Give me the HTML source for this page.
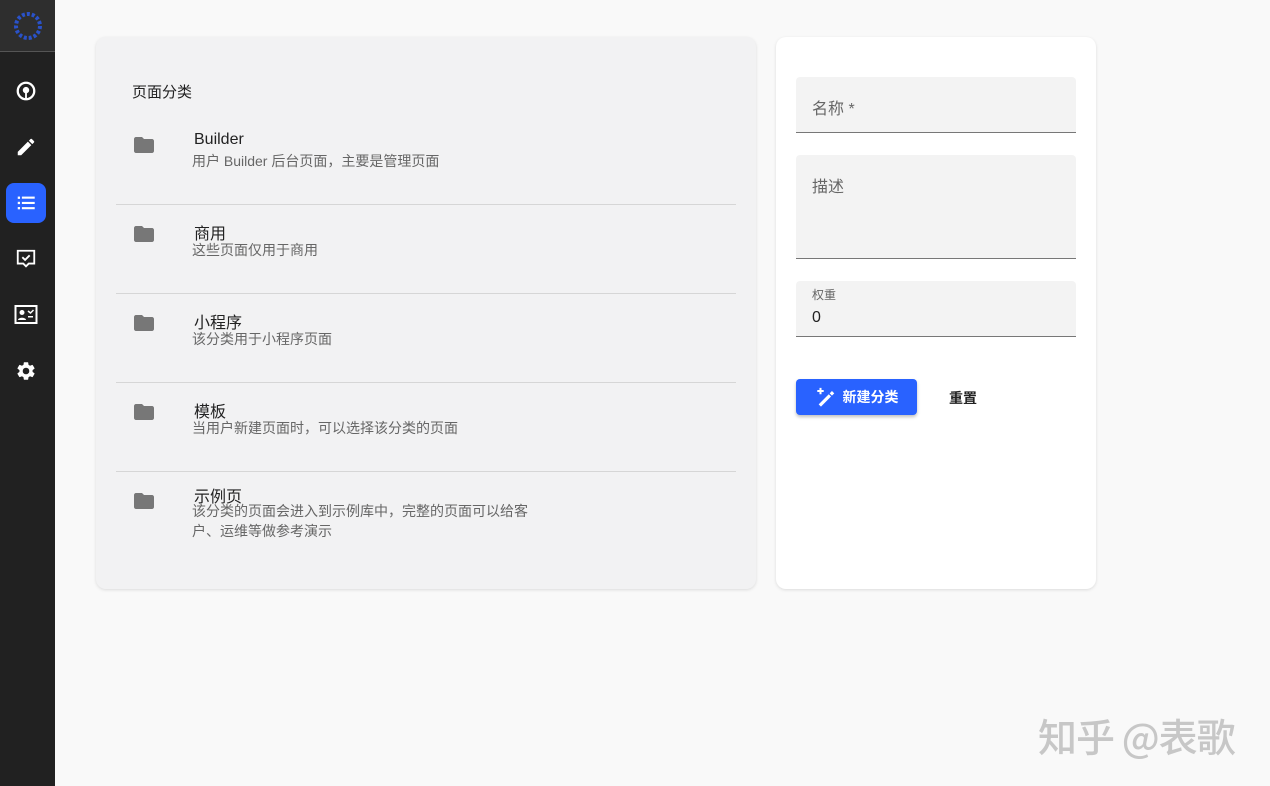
<!DOCTYPE html>
<html><head><meta charset="utf-8"><style>
*{box-sizing:border-box;margin:0;padding:0}
body{width:1270px;height:786px;background:#f9f9f9;font-family:"Liberation Sans","Noto Sans CJK SC",sans-serif;position:relative;overflow:hidden}
.side{position:absolute;left:0;top:0;width:55px;height:786px;background:#212121}
.logo{height:52px;background:#2e2e2e;border-bottom:1px solid #555;display:flex;align-items:center;justify-content:center}
.ic{position:absolute;left:6px;width:40px;height:40px;display:flex;align-items:center;justify-content:center;border-radius:8px}
.left{position:absolute;left:96px;top:37px;width:660px;height:552px;background:#f2f2f3;border-radius:10px;box-shadow:0 1px 3px rgba(0,0,0,.12)}
.right{position:absolute;left:776px;top:37px;width:320px;height:552px;background:#fff;border-radius:10px;box-shadow:0 1px 3px rgba(0,0,0,.12)}
.hd{position:absolute;left:36px;top:44px;font-size:15px;color:#222}
.item{position:absolute;left:20px;width:620px;border-bottom:1px solid #d6d6d6;height:89px}
.item .t{position:absolute;left:78px;top:15px;font-size:16px;color:#222}
.item .d{position:absolute;left:76px;top:35px;font-size:14px;color:#666;line-height:20px;width:350px}
.item svg{position:absolute;left:16px;top:17px}
.f{position:absolute;left:20px;width:280px;background:#f3f3f3;border-bottom:1px solid #777;border-radius:4px 4px 0 0}
.btn{position:absolute;left:20px;top:342px;width:121px;height:36px;background:#2962ff;border-radius:4px;color:#fff;font-size:14px;font-weight:bold;display:flex;align-items:center;justify-content:center;gap:6px;box-shadow:0 2px 3px rgba(0,0,0,.25)}
</style></head><body>
<div class="side">
<div class="logo"><svg width="32" height="32" viewBox="0 0 32 32"><circle cx="16" cy="16" r="12" fill="none" stroke="#2a52c9" stroke-width="4" stroke-dasharray="3 2"/></svg></div>
<div class="ic" style="top:71px"><svg width="22" height="22" viewBox="0 0 24 24"><circle cx="12" cy="12" r="9" fill="none" stroke="#fff" stroke-width="2.5"/><circle cx="12" cy="11" r="3.5" fill="#fff"/><path d="M12 12v9" stroke="#fff" stroke-width="2"/></svg></div>
<div class="ic" style="top:127px"><svg width="22" height="22" viewBox="0 0 24 24"><path fill="#fff" d="M3 17.25V21h3.75L17.8 9.94l-3.75-3.75L3 17.25zM20.7 7.04a1 1 0 000-1.41l-2.34-2.34a1 1 0 00-1.41 0l-1.83 1.83 3.75 3.75 1.83-1.83z"/></svg></div>
<div class="ic" style="top:183px;background:#2962ff"><svg width="22" height="22" viewBox="0 0 24 24" fill="#fff"><rect x="3" y="5" width="2.5" height="2.5"/><rect x="3" y="10.7" width="2.5" height="2.5"/><rect x="3" y="16.4" width="2.5" height="2.5"/><rect x="7.5" y="5" width="14" height="2.3"/><rect x="7.5" y="10.8" width="14" height="2.3"/><rect x="7.5" y="16.5" width="14" height="2.3"/></svg></div>
<div class="ic" style="top:239px"><svg width="22" height="22" viewBox="0 0 24 24"><path d="M3 3h18v14h-6l-3 3-3-3H3z" fill="none" stroke="#fff" stroke-width="2"/><path d="M8 10l3 3 5-5" fill="none" stroke="#fff" stroke-width="2"/></svg></div>
<div class="ic" style="top:295px"><svg width="24" height="22" viewBox="0 0 24 22"><rect x="1.5" y="2" width="21" height="17" fill="none" stroke="#fff" stroke-width="2"/><circle cx="8" cy="8.5" r="2.5" fill="#fff"/><path d="M4 16c0-3 8-3 8 0z" fill="#fff"/><path d="M14 7l2.5 2 3-3" fill="none" stroke="#fff" stroke-width="1.5"/><rect x="14" y="12" width="5" height="1.5" fill="#fff"/></svg></div>
<div class="ic" style="top:351px"><svg width="22" height="22" viewBox="0 0 24 24"><path fill="#fff" d="M19.14 12.94c.04-.3.06-.61.06-.94s-.02-.64-.07-.94l2.03-1.58a.49.49 0 00.12-.61l-1.92-3.32a.49.49 0 00-.59-.22l-2.39.96c-.5-.38-1.03-.7-1.620-.94l-.36-2.54a.48.48 0 00-.48-.41h-3.84a.48.48 0 00-.47.41l-.36 2.54c-.59.24-1.13.57-1.62.94l-2.39-.96a.49.49 0 00-.59.22L2.74 8.87a.47.47 0 00.12.61l2.03 1.58c-.05.3-.09.63-.09.94s.02.64.07.94l-2.03 1.58a.49.49 0 00-.12.61l1.92 3.32c.12.22.37.29.59.22l2.39-.96c.5.38 1.03.7 1.62.94l.36 2.54c.05.24.24.41.48.41h3.840c.24 0 .44-.17.47-.41l.36-2.54c.59-.24 1.13-.56 1.62-.94l2.39.96c.22.08.47 0 .59-.22l1.92-3.32a.47.47 0 00-.12-.61l-2.01-1.58zM12 15.6A3.6 3.6 0 1112 8.4a3.6 3.6 0 010 7.2z"/></svg></div>
</div>
<div class="left">
<div class="hd">页面分类</div>
<div class="item" style="top:79px"><svg width="24" height="24" viewBox="0 0 24 24"><path fill="#777" d="M10 4H4c-1.1 0-2 .9-2 2v12c0 1.1.9 2 2 2h16c1.1 0 2-.9 2-2V8c0-1.1-.9-2-2-2h-8l-2-2z"/></svg><div class="t">Builder</div><div class="d">用户 Builder 后台页面，主要是管理页面</div></div>
<div class="item" style="top:168px"><svg width="24" height="24" viewBox="0 0 24 24"><path fill="#777" d="M10 4H4c-1.1 0-2 .9-2 2v12c0 1.1.9 2 2 2h16c1.1 0 2-.9 2-2V8c0-1.1-.9-2-2-2h-8l-2-2z"/></svg><div class="t">商用</div><div class="d">这些页面仅用于商用</div></div>
<div class="item" style="top:257px"><svg width="24" height="24" viewBox="0 0 24 24"><path fill="#777" d="M10 4H4c-1.1 0-2 .9-2 2v12c0 1.1.9 2 2 2h16c1.1 0 2-.9 2-2V8c0-1.1-.9-2-2-2h-8l-2-2z"/></svg><div class="t">小程序</div><div class="d">该分类用于小程序页面</div></div>
<div class="item" style="top:346px"><svg width="24" height="24" viewBox="0 0 24 24"><path fill="#777" d="M10 4H4c-1.1 0-2 .9-2 2v12c0 1.1.9 2 2 2h16c1.1 0 2-.9 2-2V8c0-1.1-.9-2-2-2h-8l-2-2z"/></svg><div class="t">模板</div><div class="d">当用户新建页面时，可以选择该分类的页面</div></div>
<div class="item" style="top:435px;border:none"><svg width="24" height="24" viewBox="0 0 24 24"><path fill="#777" d="M10 4H4c-1.1 0-2 .9-2 2v12c0 1.1.9 2 2 2h16c1.1 0 2-.9 2-2V8c0-1.1-.9-2-2-2h-8l-2-2z"/></svg><div class="t" style="top:11px">示例页</div><div class="d" style="top:29px">该分类的页面会进入到示例库中，完整的页面可以给客户、运维等做参考演示</div></div>
</div>
<div class="right">
<div class="f" style="top:40px;height:56px"><span style="position:absolute;left:16px;top:18px;font-size:16px;color:#666">名称 *</span></div>
<div class="f" style="top:118px;height:104px"><span style="position:absolute;left:16px;top:18px;font-size:16px;color:#666">描述</span></div>
<div class="f" style="top:244px;height:56px"><span style="position:absolute;left:16px;top:5px;font-size:12px;color:#666">权重</span><span style="position:absolute;left:16px;top:28px;font-size:16px;color:#222">0</span></div>
<div class="btn"><svg width="22" height="22" viewBox="0 0 24 24" fill="#fff"><path d="M4 20l11-11 2.5 2.5-11 11zM16 8l2.5-2.5 2.5 2.5-2.5 2.5z"/><path d="M6 2v7M2.5 5.5h7" stroke="#fff" stroke-width="2.2"/></svg>新建分类</div>
<div style="position:absolute;left:173px;top:351px;font-size:14px;font-weight:bold;color:#222">重置</div>
</div>
<div style="position:absolute;left:1038px;top:708px;font-size:39px;font-weight:500;color:rgba(190,190,190,.85);font-family:'Noto Sans CJK SC',sans-serif;letter-spacing:-1px">知乎 @表歌</div>
</body></html>
